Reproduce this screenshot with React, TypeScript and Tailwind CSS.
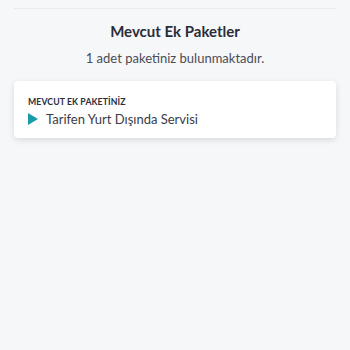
export default function App() {
  return (
    <div className="min-h-[350px] w-[350px] bg-[#f6f7f9] px-[14px] font-['Lato','Noto_Sans',sans-serif]">
      <div className="pt-2">
        <div className="h-px bg-[#e9ebef]" />
      </div>
      <h1 className="mt-[11px] text-center text-[15px] font-bold leading-[22px] text-[#2b2d3a]">
        Mevcut Ek Paketler
      </h1>
      <p className="mt-[6px] text-center text-[13px] leading-[20px] text-[#4a4c57]">
        1 adet paketiniz bulunmaktadır.
      </p>
      <div className="mt-[13px] rounded-[4px] bg-white px-[14px] pb-[9px] pt-[14px] shadow-[0_2px_6px_rgba(0,0,0,0.12)]">
        <div className="text-[8.7px] font-bold uppercase leading-[14px] tracking-[0.1px] text-[#2b2d3a]">
          MEVCUT EK PAKETİNİZ
        </div>
        <div className="flex items-center gap-[8px]">
          <svg width="10" height="12" viewBox="0 0 10 12">
            <path d="M0 0 L10 6 L0 12 Z" fill="#1a9ba8" />
          </svg>
          <span className="text-[13px] leading-[20px] text-[#3a3c47]">
            Tarifen Yurt Dışında Servisi
          </span>
        </div>
      </div>
    </div>
  );
}
